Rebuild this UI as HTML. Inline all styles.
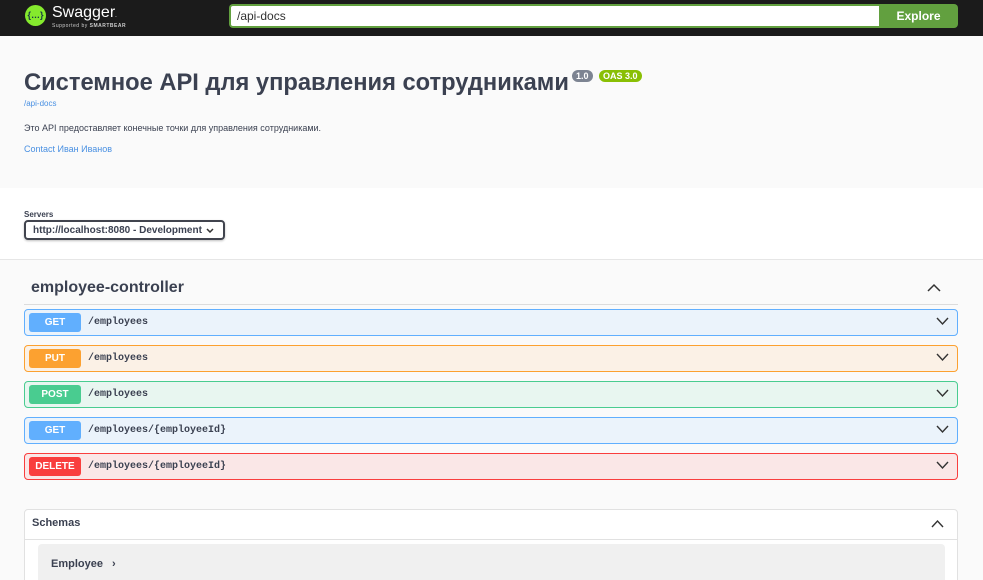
<!DOCTYPE html>
<html><head><meta charset="utf-8"><style>
*{box-sizing:border-box;margin:0;padding:0}
html,body{width:983px;height:580px;overflow:hidden}
body{background:#fff;font-family:"Liberation Sans",sans-serif;color:#3b4151;position:relative}
.hdr{position:absolute;left:0;top:0;width:983px;height:36px;background:#1b1b1b}
.logo{position:absolute;left:25px;top:5px;width:21px;height:21px;border-radius:50%;background:#85ea2d;color:#173647;font-size:9px;font-weight:bold;text-align:center;line-height:21px}
.sw{position:absolute;left:52px;top:4px;color:#fff;font-size:16px}
.sb{position:absolute;left:52px;top:23px;color:#ccc;font-size:5px;letter-spacing:.5px}
.inp{position:absolute;left:229px;top:4px;width:651px;height:24px;background:#fff;border:2px solid #62a03f;border-right:none;border-radius:4px 0 0 4px;font-size:12px;color:#333;padding:3px 6px}
.btn{position:absolute;left:879px;top:4px;width:79px;height:24px;background:#62a03f;border-radius:0 4px 4px 0;color:#fff;font-weight:bold;font-size:12px;text-align:center;line-height:24px}
.info{position:absolute;left:0;top:36px;width:983px;height:152px;background:#fafafa}
h1{position:absolute;left:24px;top:70px;font-size:23.7px;font-weight:bold;white-space:nowrap}
.bd{position:absolute;top:70px;height:12px;border-radius:6px;color:#fff;font-size:9px;font-weight:bold;line-height:12px;padding:0 4px}
.small{position:absolute;font-size:9px}
.lnk{color:#4990e2}
.srv{position:absolute;left:24px;top:220px;width:201px;height:20px;border:2px solid #41444e;border-radius:4px;font-size:10px;font-weight:bold;padding:3px 7px;box-shadow:0 1px 2px rgba(0,0,0,.25)}
.sec{position:absolute;left:0;top:259px;width:983px;height:321px;background:#fafafa;border-top:1px solid #e6e6e6}
.tag{position:absolute;left:31px;top:279px;font-size:16px;font-weight:bold}
.tline{position:absolute;left:24px;top:304px;width:934px;height:1px;background:#dcdcdc}
.op{position:absolute;left:24px;width:934px;height:27px;border:1px solid;border-radius:4px}
.m{position:absolute;left:4px;top:3px;width:52px;height:19px;border-radius:3px;color:#fff;font-size:10px;font-weight:bold;text-align:center;line-height:19px}
.p{position:absolute;left:63px;top:7px;font-family:"Liberation Mono",monospace;font-size:10px;font-weight:bold;color:#3b4151}
.ch{position:absolute;right:8px;top:7px}
.sch{position:absolute;left:24px;top:509px;width:934px;height:80px;border:1px solid #e1e1e1;border-radius:4px;background:#fff}
</style></head><body>
<div class="hdr"><div class="logo">{…}</div><div class="sw">Swagger<span style="font-size:6px">.</span></div><div class="sb">Supported by <b>SMARTBEAR</b></div>
<div class="inp">/api-docs</div><div class="btn">Explore</div></div>
<div class="info"></div>
<h1>Системное API для управления сотрудниками</h1>
<div class="bd" style="left:572px;background:#7d8492">1.0</div>
<div class="bd" style="left:599px;background:#89bf04">OAS 3.0</div>
<div class="small lnk" style="left:24px;top:99px;font-size:8px">/api-docs</div>
<div class="small" style="left:24px;top:123px">Это API предоставляет конечные точки для управления сотрудниками.</div>
<div class="small lnk" style="left:24px;top:144px">Contact Иван Иванов</div>
<div class="small" style="left:24px;top:210px;font-size:8px;font-weight:bold">Servers</div>
<div class="srv">http://localhost:8080 - Development<svg style="position:absolute;right:9px;top:6px" width="8" height="5" viewBox="0 0 8 5"><path d="M1 1l3 3 3-3" stroke="#333" stroke-width="1.5" fill="none"/></svg></div>
<div class="sec"></div>
<div class="tag">employee-controller</div>
<svg style="position:absolute;left:927px;top:283px" width="14" height="9" viewBox="0 0 14 9"><path d="M1 8l6-6 6 6" stroke="#333" stroke-width="1.5" fill="none"/></svg>
<div class="tline"></div>
<div class="op" style="top:309px;background:#ebf3fb;border-color:#61affe"><div class="m" style="background:#61affe">GET</div><div class="p">/employees</div><svg class="ch" width="13" height="9" viewBox="0 0 13 9"><path d="M1 1l5.5 6 5.5-6" stroke="#333" stroke-width="1.4" fill="none"/></svg></div>
<div class="op" style="top:345px;background:#fbf1e6;border-color:#fca130"><div class="m" style="background:#fca130">PUT</div><div class="p">/employees</div><svg class="ch" width="13" height="9" viewBox="0 0 13 9"><path d="M1 1l5.5 6 5.5-6" stroke="#333" stroke-width="1.4" fill="none"/></svg></div>
<div class="op" style="top:381px;background:#e8f6f0;border-color:#49cc90"><div class="m" style="background:#49cc90">POST</div><div class="p">/employees</div><svg class="ch" width="13" height="9" viewBox="0 0 13 9"><path d="M1 1l5.5 6 5.5-6" stroke="#333" stroke-width="1.4" fill="none"/></svg></div>
<div class="op" style="top:417px;background:#ebf3fb;border-color:#61affe"><div class="m" style="background:#61affe">GET</div><div class="p">/employees/{employeeId}</div><svg class="ch" width="13" height="9" viewBox="0 0 13 9"><path d="M1 1l5.5 6 5.5-6" stroke="#333" stroke-width="1.4" fill="none"/></svg></div>
<div class="op" style="top:453px;background:#fae7e7;border-color:#f93e3e"><div class="m" style="background:#f93e3e">DELETE</div><div class="p">/employees/{employeeId}</div><svg class="ch" width="13" height="9" viewBox="0 0 13 9"><path d="M1 1l5.5 6 5.5-6" stroke="#333" stroke-width="1.4" fill="none"/></svg></div>
<div class="sch">
<div style="position:absolute;left:7px;top:7px;font-size:11px;font-weight:bold">Schemas</div>
<svg style="position:absolute;right:13px;top:9px" width="13" height="9" viewBox="0 0 13 9"><path d="M1 8l5.5-6 5.5 6" stroke="#333" stroke-width="1.4" fill="none"/></svg>
<div style="position:absolute;left:0;top:29px;width:932px;height:1px;background:#e1e1e1"></div>
<div style="position:absolute;left:13px;top:34px;width:907px;height:50px;background:#f0f0f0;border-radius:4px"><div style="position:absolute;left:13px;top:14px;font-size:11px;font-weight:bold">Employee <span style="margin-left:6px">›</span></div></div>
</div>
</body></html>
